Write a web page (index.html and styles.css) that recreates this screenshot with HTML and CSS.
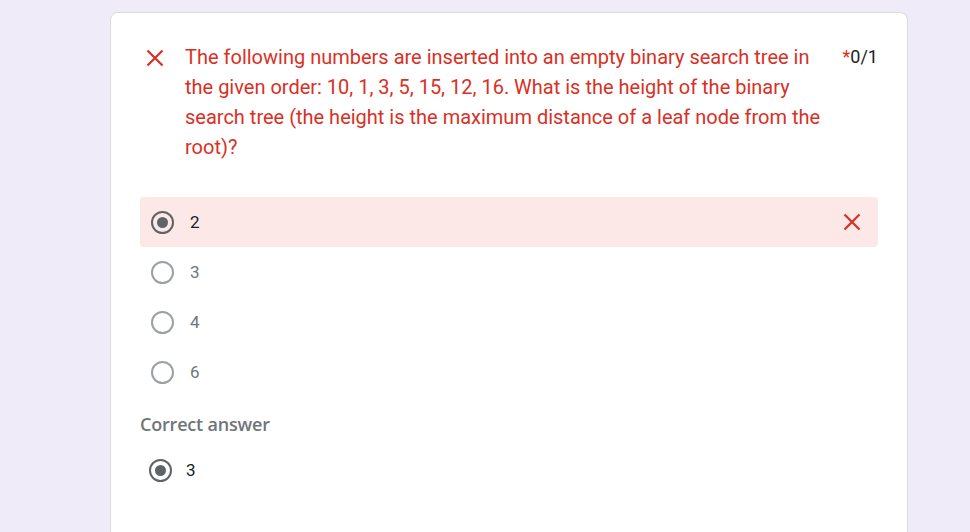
FILE: index.html
```html
<!DOCTYPE html>
<html>
<head>
<meta charset="utf-8">
<link rel="stylesheet" href="styles.css">
</head>
<body>
<div class="card">
  <div class="header">
    <svg class="xicon" width="18" height="18" viewBox="0 0 18 18"><path d="M1.5 1.5L16.5 16.5M16.5 1.5L1.5 16.5" stroke="#d93025" stroke-width="2.2" fill="none"/></svg>
    <div class="qtext">The following numbers are inserted into an empty binary search tree in the given order: 10, 1, 3, 5, 15, 12, 16. What is the height of the binary search tree (the height is the maximum distance of a leaf node from the root)?</div>
    <div class="points"><span class="ast">*</span>0/1</div>
  </div>
  <div class="options">
    <div class="opt wrong">
      <span class="radio on"></span><span class="label sel">2</span>
      <svg class="wrongx" width="18" height="18" viewBox="0 0 18 18"><path d="M1.5 1.5L16.5 16.5M16.5 1.5L1.5 16.5" stroke="#d93025" stroke-width="2.2" fill="none"/></svg>
    </div>
    <div class="opt"><span class="radio"></span><span class="label">3</span></div>
    <div class="opt"><span class="radio"></span><span class="label">4</span></div>
    <div class="opt"><span class="radio"></span><span class="label">6</span></div>
  </div>
  <div class="correct-title">Correct answer</div>
  <div class="opt correct"><span class="radio on"></span><span class="label sel">3</span></div>
</div>
</body>
</html>
```
FILE: styles.css
```css
html, body { margin: 0; padding: 0; }
body {
  background: #f0ebf8;
  font-family: Roboto, "Liberation Sans", Arial, sans-serif;
  height: 532px;
  overflow: hidden;
}
.card {
  margin: 12px 0 0 110px;
  width: 738px;
  min-height: 560px;
  background: #fff;
  border: 1px solid #dadce0;
  border-radius: 8px;
  padding: 29px 29px 0 29px;
  box-sizing: content-box;
}
.header {
  display: flex;
  align-items: flex-start;
  padding-left: 6px;
}
.xicon { flex: none; margin-top: 7px; margin-right: 21px; }
.qtext {
  width: 640px;
  color: #d93025;
  font-size: 20px;
  line-height: 30px;
}
.points {
  margin-left: auto;
  font-size: 18px;
  line-height: 30px;
  color: #202124;
}
.ast { color: #d93025; }
.options { margin-top: 35px; }
.opt {
  display: flex;
  align-items: center;
  height: 50px;
  padding-left: 11px;
  padding-right: 17px;
  border-radius: 4px;
}
.opt.wrong { background: #fce8e6; }
.radio {
  width: 23px;
  height: 23px;
  box-sizing: border-box;
  border: 2px solid #9aa0a6;
  border-radius: 50%;
  display: flex;
  align-items: center;
  justify-content: center;
  flex: none;
}
.radio.on { border-color: #5f6368; }
.radio.on::after {
  content: "";
  width: 11px;
  height: 11px;
  border-radius: 50%;
  background: #5f6368;
}
.label {
  margin-left: 16px;
  font-size: 17px;
  color: #70757a;
}
.label.sel { color: #202124; }
.wrongx { margin-left: auto; }
.correct-title {
  margin-top: 15px;
  line-height: 24px;
  font-family: "Open Sans", Roboto, sans-serif;
  font-size: 18px;
  font-weight: 600;
  letter-spacing: -0.2px;
  color: #70757a;
}
.opt.correct { margin-top: 9px; padding-left: 9px; }
.opt.correct .label { margin-left: 14px; }
```
